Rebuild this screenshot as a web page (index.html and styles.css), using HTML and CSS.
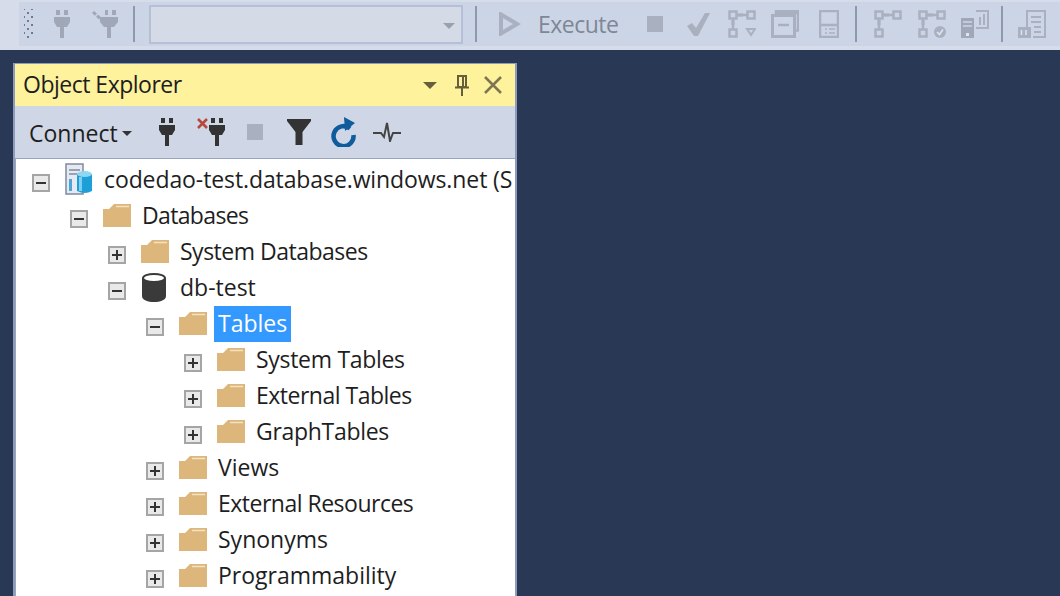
FILE: index.html
```html
<!DOCTYPE html>
<html lang="en">
<head>
  <meta charset="UTF-8" />
  <meta name="viewport" content="width=device-width, initial-scale=1.0" />
  <title>Object Explorer</title>
  <link rel="stylesheet" href="styles.css">
</head>
<body>
  <svg class="defs" width="0" height="0">
    <symbol id="folder" viewBox="0 0 28 24">
      <path d="M0 6 L6 6 L11 1 L28 1 L28 24 L0 24 Z" fill="#dcb67a"/>
      <path d="M13 3.500 H26" stroke="#f3e2c4" stroke-width="1.500"/>
    </symbol>
    <symbol id="plug" viewBox="0 0 16 28">
      <path d="M2 0h4v5H2zM10 0h4v5h-4zM0 7h16v5l-3 5h-3v11H6V17H3l-3-5z" fill="currentColor"/>
    </symbol>
  </svg>

  <div class="toolbar-strip">
    <div class="toolbar">
      <div class="grip"></div>
      <div class="tool"><svg width="16" height="28"><use href="#plug"/></svg></div>
      <div class="tool"><svg width="28" height="28" viewBox="0 0 28 28">
        <path d="M14 0h3v5h-3zM21 0h4v5h-4zM9 7h18v5l-4 5h-3v11h-4V17h-3L9 12z" fill="#a0a8b8"/>
        <path d="M2 2l12 11" stroke="#a0a8b8" stroke-width="3" stroke-dasharray="4 1.500"/>
      </svg></div>
      <div class="sep sep-first"></div>
      <div class="combo"><span class="combo-arrow"></span></div>
      <div class="sep sep-combo"></div>
      <div class="tool tool-play"><svg width="22" height="24" viewBox="0 0 22 24">
        <path d="M2 2.500 L18 12 L2 21.500 Z" fill="none" stroke="#a9b1c0" stroke-width="4"/>
      </svg></div>
      <span class="execute tight">Execute</span>
      <div class="tool"><div class="stop"></div></div>
      <div class="tool"><svg width="24" height="24" viewBox="0 0 24 24">
        <path d="M1 14 L6 11 L10 16 L19 1 L24 1 L12 24 L8 24 Z" fill="#a9b1bf"/>
      </svg></div>
      <div class="tool"><svg width="28" height="28" viewBox="0 0 28 28" fill="none" stroke="#a9b1c0" stroke-width="2.500">
        <path d="M1.500 1.500h7v7h-7zM19.500 1.500h7v7h-7zM9 5h10M1.500 19.500h7v7h-7zM5 9v10"/>
        <path d="M10 3.500h5v3h-5zM3.500 10h3v5h-3z" fill="#a9b1c0" stroke="none"/>
        <path d="M19 19h8l-4 6z" stroke-width="2"/>
      </svg></div>
      <div class="tool"><svg width="28" height="28" viewBox="0 0 28 28" fill="none" stroke="#a9b1c0" stroke-width="2">
        <path d="M5 4V0.500h22v20h-3" stroke-width="2.500"/><path d="M5 2h22" stroke-width="4"/>
        <path d="M1.500 5.500h22v21h-22z" stroke-width="3"/><path d="M7 15h11" stroke-width="2.500"/>
      </svg></div>
      <div class="tool"><svg width="20" height="28" viewBox="0 0 20 28" fill="none" stroke="#a9b1c0" stroke-width="2.500">
        <path d="M1 1h18v26H1zM1 15h18"/>
        <path d="M6 19h2M6 23h2M10 19h6M10 23h6" stroke-width="1.500"/>
      </svg></div>
      <div class="sep sep-mid"></div>
      <div class="tool"><svg width="28" height="28" viewBox="0 0 28 28" fill="none" stroke="#a9b1c0" stroke-width="2.500">
        <path d="M1.500 1.500h7v7h-7zM19.500 1.500h7v7h-7zM9 5h10M1.500 19.500h7v7h-7zM5 9v10"/>
        <path d="M10 3.500h5v3h-5zM3.500 10h3v5h-3z" fill="#a9b1c0" stroke="none"/>
      </svg></div>
      <div class="tool"><svg width="28" height="28" viewBox="0 0 28 28" fill="none" stroke="#a9b1c0" stroke-width="2.500">
        <path d="M1.500 1.500h7v7h-7zM19.500 1.500h7v7h-7zM9 5h10M1.500 19.500h7v7h-7zM5 9v10"/>
        <path d="M10 3.500h5v3h-5zM3.500 10h3v5h-3z" fill="#a9b1c0" stroke="none"/>
        <circle cx="22" cy="22" r="6" fill="#a9b1c0" stroke="none"/>
        <path d="M19 22l2.500 2.500 3.500-5" stroke="#dfe4ee" stroke-width="1.500"/>
      </svg></div>
      <div class="tool"><svg width="28" height="28" viewBox="0 0 28 28">
        <path d="M0 8h13v20H0z" fill="#a0a8b8"/>
        <path d="M2 12h9M2 16h9" stroke="#ccd5e6" stroke-width="1.500"/>
        <path d="M5 23h3v3H5z" fill="#dfe4ee"/>
        <path d="M15 1h12v17H15M19 15V7M23 15V4" fill="none" stroke="#a9b1c0" stroke-width="2"/>
      </svg></div>
      <div class="sep sep-last"></div>
      <div class="tool"><svg width="28" height="28" viewBox="0 0 28 28" fill="none" stroke="#a9b1c0" stroke-width="2">
        <path d="M9 17V1h18v26H15M13 7h10M13 12h10M16 17h7M16 22h7"/>
        <path d="M0 17h13v11H0z" fill="#a9b1c0" stroke="none"/>
        <path d="M3.500 20v5M8 20v5" stroke="#dfe4ee" stroke-width="1.500"/>
      </svg></div>
    </div>
  </div>

  <div class="panel">
    <div class="panel-title">
      <span class="panel-name tight">Object Explorer</span>
      <span class="title-arrow"></span>
      <svg class="title-pin" width="14" height="21" viewBox="0 0 14 21" fill="none" stroke="#665f3c" stroke-width="2">
        <path d="M3 1h8v11H3zM8 2v10M0 12.500h14M7 13v8"/>
      </svg>
      <svg class="title-close" width="18" height="18" viewBox="0 0 18 18" stroke="#7d7650" stroke-width="2.500">
        <path d="M1 1l16 16M17 1L1 17"/>
      </svg>
    </div>

    <div class="panel-tools">
      <span class="connect">Connect</span>
      <span class="connect-arrow"></span>
      <svg class="pt-plug" width="16" height="28"><use href="#plug"/></svg>
      <svg class="pt-plug-x" width="28" height="28" viewBox="0 0 28 28">
        <path d="M1 1l9 9M10 1L1 10" stroke="#b5473c" stroke-width="2.500"/>
        <path d="M14 0h4v5h-4zM22 0h4v5h-4zM12 7h16v5l-3 5h-3v11h-4V17h-3l-3-5z" fill="#333"/>
      </svg>
      <div class="pt-stop"></div>
      <svg class="pt-filter" width="24" height="28" viewBox="0 0 24 28">
        <path d="M0 1h24v2L15.500 14v13h-7V14L0 3Z" fill="#333"/>
      </svg>
      <svg class="pt-refresh" width="26" height="30" viewBox="0 0 26 30" fill="none">
        <path d="M19 11.500 A10 10 0 1 0 22.500 18" stroke="#0e5c9c" stroke-width="4.500"/>
        <path d="M13 0 L24 6 L14 14 Z" fill="#0e5c9c"/>
      </svg>
      <svg class="pt-pulse" width="28" height="20" viewBox="0 0 28 20" fill="none" stroke="#444" stroke-width="2">
        <path d="M0 11h8l3 4 3-14 3 18 3-8h8"/>
      </svg>
    </div>

    <div class="tree">
      <div class="row">
        <span class="expander minus"></span>
        <svg class="icon" width="28" height="32" viewBox="0 0 28 32">
          <path d="M1 1h17v30H1z" fill="#e6e9f2" stroke="#7f8a9e" stroke-width="1.500"/>
          <path d="M4 7h11M4 11h11" stroke="#7f8a9e" stroke-width="1.500"/>
          <path d="M4 16h3v12H4z" fill="#4ba6d6"/>
          <path d="M12 11h15v17q-7 4-15 0z" fill="#1e9fd8"/>
          <path d="M14 14h3v14h-3z" fill="#7fd0f0"/>
          <ellipse cx="19.500" cy="11" rx="7.500" ry="3" fill="#8fd6f2"/>
        </svg>
        <span class="label loose">codedao-test.database.windows.net (S</span>
      </div>
      <div class="row level-1">
        <span class="expander minus"></span>
        <svg class="icon" width="28" height="24"><use href="#folder"/></svg>
        <span class="label tighter">Databases</span>
      </div>
      <div class="row level-2">
        <span class="expander plus"></span>
        <svg class="icon" width="28" height="24"><use href="#folder"/></svg>
        <span class="label tight">System Databases</span>
      </div>
      <div class="row level-2">
        <span class="expander minus"></span>
        <svg class="icon" width="28" height="29" viewBox="0 0 28 29">
          <path d="M1 5v18c0 8 24 8 24 0V5z" fill="#3a3a3a"/>
          <ellipse cx="13" cy="5" rx="11" ry="4" fill="#fff" stroke="#3a3a3a" stroke-width="2"/>
        </svg>
        <span class="label">db-test</span>
      </div>
      <div class="row level-3">
        <span class="expander minus"></span>
        <svg class="icon" width="28" height="24"><use href="#folder"/></svg>
        <span class="label selected">Tables</span>
      </div>
      <div class="row level-4">
        <span class="expander plus"></span>
        <svg class="icon" width="28" height="24"><use href="#folder"/></svg>
        <span class="label slight">System Tables</span>
      </div>
      <div class="row level-4">
        <span class="expander plus"></span>
        <svg class="icon" width="28" height="24"><use href="#folder"/></svg>
        <span class="label tight">External Tables</span>
      </div>
      <div class="row level-4">
        <span class="expander plus"></span>
        <svg class="icon" width="28" height="24"><use href="#folder"/></svg>
        <span class="label slight">GraphTables</span>
      </div>
      <div class="row level-3">
        <span class="expander plus"></span>
        <svg class="icon" width="28" height="24"><use href="#folder"/></svg>
        <span class="label">Views</span>
      </div>
      <div class="row level-3">
        <span class="expander plus"></span>
        <svg class="icon" width="28" height="24"><use href="#folder"/></svg>
        <span class="label tight">External Resources</span>
      </div>
      <div class="row level-3">
        <span class="expander plus"></span>
        <svg class="icon" width="28" height="24"><use href="#folder"/></svg>
        <span class="label">Synonyms</span>
      </div>
      <div class="row level-3">
        <span class="expander plus"></span>
        <svg class="icon" width="28" height="24"><use href="#folder"/></svg>
        <span class="label">Programmability</span>
      </div>
    </div>
  </div>
</body>
</html>
```

FILE: styles.css
```css
html, body {
  height: 100%;
  overflow: hidden;
}

body {
  margin: 0;
  background-color: #293955;
  font-family: "Open Sans", "Noto Sans", sans-serif;
  font-size: 23px;
  color: #1e1e1e;
}

.defs {
  display: block;
  height: 0;
}

/* Open Sans runs a bit wider than the original font on some words */
.tight { letter-spacing: -0.5px; }
.tighter { letter-spacing: -0.65px; }
.slight { letter-spacing: -0.3px; }
.loose { letter-spacing: -0.1px; }

/* top toolbar, everything in it is disabled */
.toolbar-strip {
  height: 50px;
  padding: 2px 0 4px 19px;
  box-sizing: border-box;
  background: #d6dce9;
}

.toolbar {
  height: 44px;
  display: flex;
  align-items: center;
  background: #ccd5e6;
  color: #a0a8b8;
}

.toolbar > * {
  flex: none;
}

.grip {
  width: 10px;
  height: 30px;
  margin-left: 5px;
  margin-right: 6px;
  background-image:
    radial-gradient(#6f7a8f 1px, transparent 1.4px),
    radial-gradient(#6f7a8f 1px, transparent 1.4px);
  background-size: 8px 8px;
  background-position: 0 0, 4px 4px;
}

.tool {
  width: 28px;
  margin: 0 7.75px;
  display: flex;
  justify-content: center;
}

.sep {
  width: 2px;
  height: 36px;
  background: #8f99ad;
}

.sep-first { margin: 0 14px 0 6px; }
.sep-combo { margin: 0 12px 0 12px; }
.sep-mid { margin: 0 10px 0 4px; }
.sep-last { margin: 0 7px 0 4px; }

.combo {
  width: 314px;
  height: 39px;
  box-sizing: border-box;
  background: #d5dbe6;
  border: 2px solid #b5c0d6;
  position: relative;
}

.combo-arrow {
  position: absolute;
  right: 6px;
  top: 16px;
  border: 6px solid transparent;
  border-top-color: #99a1b1;
  border-bottom: 0;
}

.tool-play {
  margin-left: 7px;
  margin-right: 14px;
}

.execute {
  color: #7e8796;
  width: 95px;
}

.stop {
  width: 16px;
  height: 16px;
  background: #a9b1c0;
}

/* object explorer */
.panel {
  margin: 13px 0 0 13px;
  width: 504px;
  height: 540px;
  box-sizing: border-box;
  border: 2px solid #8e9bbc;
  border-top-width: 1px;
  border-bottom: 0;
  background: #cfd6e5;
}

.panel-title {
  height: 42px;
  background: #fff29d;
  display: flex;
  align-items: center;
  padding: 0 13px 0 8px;
}

.panel-name {
  flex: 1;
  color: #1e1e1e;
  margin-bottom: 3px;
}

.title-arrow {
  border: 7px solid transparent;
  border-top-color: #665f3c;
  border-bottom: 0;
  margin-right: 18px;
}

.title-pin {
  margin-right: 15px;
}

.panel-tools {
  height: 52px;
  display: flex;
  align-items: center;
  padding-left: 14px;
  box-sizing: border-box;
}

.connect {
  color: #1e1e1e;
  margin-top: 2px;
}

.connect-arrow {
  border: 5px solid transparent;
  border-top-color: #333;
  border-bottom: 0;
  margin: 2px 0 0 4px;
}

.pt-plug { margin-left: 27px; color: #333; }
.pt-plug-x { margin-left: 22px; }

.pt-stop {
  width: 16px;
  height: 16px;
  background: #a9b1c0;
  margin-left: 22px;
}

.pt-filter { margin-left: 24px; }
.pt-refresh { margin-left: 20px; }
.pt-pulse { margin-left: 16px; }

.tree {
  height: 438px;
  padding-top: 3px;
  background: #fff;
  box-sizing: border-box;
  border-top: 1px solid #9aa6c0;
  border-left: 1px solid #9aa6c0;
  overflow: hidden;
}

.row {
  height: 36px;
  display: flex;
  align-items: center;
  padding-left: 16px;
  white-space: nowrap;
}

.level-1 { padding-left: 54px; }
.level-2 { padding-left: 92px; }
.level-3 { padding-left: 130px; }
.level-4 { padding-left: 168px; }

.expander {
  flex: none;
  width: 18px;
  height: 18px;
  box-sizing: border-box;
  margin-top: 5px;
  margin-right: 15px;
  border: 2px solid #a5a5a5;
  background: #e9e9e9;
  position: relative;
}

.expander::before {
  content: "";
  position: absolute;
  left: 2px;
  top: 6px;
  width: 10px;
  height: 2px;
  background: #333;
}

.plus::after {
  content: "";
  position: absolute;
  left: 6px;
  top: 2px;
  width: 2px;
  height: 10px;
  background: #333;
}

.icon {
  flex: none;
  margin-bottom: 2px;
}

.label {
  height: 36px;
  line-height: 34px;
  padding: 0 4px;
  margin-left: 7px;
}

.selected {
  background: #3399ff;
  color: #fff;
}
```
